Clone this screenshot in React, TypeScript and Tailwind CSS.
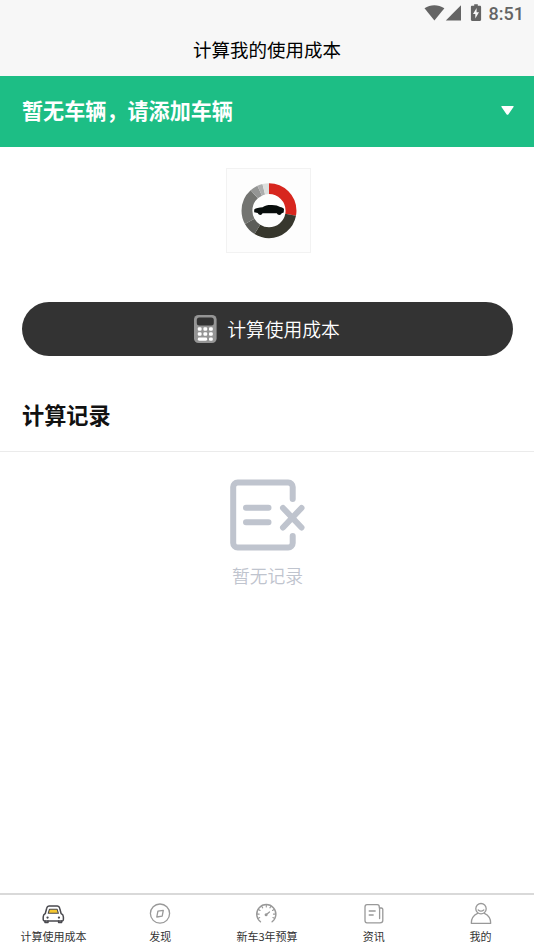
import type { ReactNode } from 'react';

const COST_SEGMENTS = [
  { color: '#d7261e', from: 0, to: 101 },
  { color: '#37372d', from: 101, to: 212 },
  { color: '#5c5d59', from: 212, to: 241 },
  { color: '#737471', from: 241, to: 318 },
  { color: '#949594', from: 318, to: 335 },
  { color: '#adaeae', from: 335, to: 346 },
  { color: '#dcdfdd', from: 346, to: 360 },
];

function StatusBar() {
  return (
    <div className="flex h-[27px] items-start justify-end pr-[10px] text-[#646464]">
      <svg width="60" height="21" viewBox="0 0 60 21" fill="currentColor">
        <path d="M0.500 8.300C6.500 4.200 14 4.200 20.400 8.300L10.400 20.500Z" />
        <path d="M37 5.200V20.500H21.800Z" />
        <path
          fillRule="evenodd"
          d="M50.200 4.200h3.600v1.600h2.100c.7 0 1.200.5 1.200 1.200v12.700c0 .7-.5 1.200-1.200 1.200h-7.800c-.7 0-1.200-.5-1.200-1.200V7c0-.7.5-1.200 1.200-1.200h2.100ZM52.600 8l-3.600 6h2.300v4.500l3.700-6.300h-2.400Z"
        />
      </svg>
      <span className="ml-[5px] font-[Roboto,sans-serif] text-[18px] leading-[27px] font-medium">8:51</span>
    </div>
  );
}

function CostRing() {
  return (
    <svg width="84" height="84" viewBox="0 0 84 84">
      <g transform="rotate(-90 42 42)">
        {COST_SEGMENTS.map(({ color, from, to }) => (
          <circle
            key={from}
            cx="42.300"
            cy="42.500"
            r="22.300"
            fill="none"
            stroke={color}
            strokeWidth="11"
            pathLength="360"
            strokeDasharray={`${to - from} ${360 - to + from}`}
            strokeDashoffset={-from}
          />
        ))}
      </g>
      <path
        fill="#080d0c"
        d="M27.500 40.500c1.700-1.400 5-2.200 8.500-2.300 2.500-2 5.500-2.400 9.500-2.300 4 .1 6.200.8 8.200 2 2 .2 3.200 1 4 2.200l-.3 3.400-2 .7a2.700 2.700 0 0 1-5 .2l-14.400-.1a2.600 2.600 0 0 1-4.900-.2L27.500 43.300Z"
      />
    </svg>
  );
}

function CalculatorIcon() {
  return (
    <svg width="23" height="29" viewBox="0 0 23 29" className="-ml-px">
      <rect x="0" y="0" width="22.600" height="28" rx="4.500" fill="#959595" />
      <rect x="2.800" y="2.500" width="17" height="8" rx="2.500" fill="#333" />
      <g fill="#fff">
        {[12.3, 17.3].map((y) =>
          [3.8, 9.4, 15].map((x) => <rect key={`${x}-${y}`} x={x} y={y} width="3.800" height="3.500" rx="1.200" />),
        )}
        <rect x="3.800" y="22.500" width="9.400" height="3.200" rx="1.400" />
        <rect x="15" y="22.500" width="3.800" height="3.200" rx="1.200" />
      </g>
    </svg>
  );
}

function EmptyIcon() {
  return (
    <svg width="76" height="74" viewBox="0 0 76 74" fill="none" stroke="#bfc4ce" strokeWidth="6" strokeLinecap="round">
      <path strokeLinejoin="round" d="M63.700 21V9a4.500 4.500 0 0 0-4.500-4.500H8.700a4.500 4.500 0 0 0-4.500 4.500V65a4.500 4.500 0 0 0 4.500 4.500h50.500a4.500 4.500 0 0 0 4.500-4.500V58" />
      <path d="M17 29.800H39.500M17 44.200H39.500" />
      <path d="M54 30 72.500 49.500M72.500 30 54 49.500" />
    </svg>
  );
}

function TabIcon({ children }: { children: ReactNode }) {
  return (
    <svg width="24" height="24" viewBox="0 0 24 24" fill="none" stroke="#999" strokeWidth="1.300" strokeLinecap="round" strokeLinejoin="round">
      {children}
    </svg>
  );
}

const TABS = [
  {
    label: '计算使用成本',
    icon: (
      <TabIcon>
        <g stroke="#4a4a4f" strokeWidth="1.500">
          <path d="M4.300 11.500 5.700 6.200Q6.200 4 8 4h8.400q1.800 0 2.300 2.200l1.400 5.300Q22.400 12.500 22.400 15v2.500q0 1.400-1.200 1.400H3.400Q2.200 18.900 2.200 17.500V15q0-2.500 2.100-3.500Z" />
          <path fill="#f6c72f" strokeWidth="1.100" d="M8.400 7.300h7.800l1.200 4H7.200Z" />
          <path d="M4 19v1.400h3V19M17.600 19v1.400h3V19" />
          <path strokeWidth="2.200" d="M6.500 15.600h.1M17.900 15.600h.1" />
        </g>
      </TabIcon>
    ),
  },
  {
    label: '发现',
    icon: (
      <TabIcon>
        <circle cx="12" cy="11.600" r="9.600" />
        <path d="M9.900 9.200 15.300 8.300 14.200 14.200 8.800 15Z" />
      </TabIcon>
    ),
  },
  {
    label: '新车3年预算',
    icon: (
      <TabIcon>
        <g transform="translate(-.7 -.2)">
          <path strokeWidth="1.400" d="M6.200 20A9.600 9.600 0 1 1 17.800 20" />
          <path
            strokeWidth="1.100"
            d="M12 3v2.200M7.400 4.400l1 1.700M16.600 4.400l-1 1.700M4.200 7.700l1.600 1M19.800 7.700l-1.600 1M2.900 12.300h2M21.100 12.300h-2M3.700 16.600l1.700-.8M20.300 16.600l-1.700-.8"
          />
          <circle cx="11.800" cy="13" r="1.500" fill="#999" stroke="none" />
          <path d="M11.800 13 15.200 10.200" />
        </g>
      </TabIcon>
    ),
  },
  {
    label: '资讯',
    icon: (
      <TabIcon>
        <path d="M17.300 6V5q0-2.300-2-2.300H5Q3 2.700 3 5v13.500q0 2.300 2 2.300h13q2.800 0 2.800-2.300V7.500Q20.800 6 19.300 6ZM17.600 6V16.500" />
        <path d="M7.200 9h6M7.200 13h4" />
      </TabIcon>
    ),
  },
  {
    label: '我的',
    icon: (
      <TabIcon>
        <circle cx="12" cy="6.700" r="5.200" />
        <path d="M9.200 7.900q2.800 2.300 5.600 0" />
        <path d="M8.600 11.400Q2.300 14.200 2.300 21.300H21.700Q21.700 14.200 15.400 11.400" />
      </TabIcon>
    ),
  },
];

function TabBar() {
  return (
    <nav className="grid h-[57px] grid-cols-5 border-t-2 border-[#d9d9d9] bg-white">
      {TABS.map(({ label, icon }) => (
        <button key={label} type="button" className="flex flex-col items-center pt-[7px]">
          {icon}
          <span className="mt-[2px] text-[11px] leading-4 whitespace-nowrap text-[#333]">{label}</span>
        </button>
      ))}
    </nav>
  );
}

export default function App() {
  return (
    <div className="flex h-[950px] w-[534px] flex-col bg-white font-['Noto_Sans_CJK_SC',sans-serif]">
      <header className="h-[76px] bg-[#f7f7f7]">
        <StatusBar />
        <h1 className="text-center text-[18.5px] leading-[45px] text-black">计算我的使用成本</h1>
      </header>

      <button type="button" className="flex h-[71px] items-center justify-between bg-[#1dbe85] pr-5 pb-[2px] pl-[22px] text-white">
        <span className="text-[21.1px] leading-[69px] font-bold">暂无车辆，请添加车辆</span>
        <svg width="13" height="9" viewBox="0 0 13 9" fill="currentColor">
          <path d="M1 0H12Q13.300 0 12.500 1L7.300 8.400Q6.500 9.300 5.700 8.400L.5 1Q-.3 0 1 0Z" />
        </svg>
      </button>

      <main className="flex flex-1 flex-col">
        <div className="mt-[21px] ml-[2px] flex h-[85px] w-[85px] items-center justify-center self-center border border-[#f2f2f2] bg-[#fdfdfd]">
          <CostRing />
        </div>

        <button
          type="button"
          className="mt-[49px] mr-[21px] ml-[22px] flex h-[54px] items-center justify-center rounded-full bg-[#333] text-white"
        >
          <CalculatorIcon />
          <span className="ml-[10px] text-[18.8px] leading-[54px] font-[350]">计算使用成本</span>
        </button>

        <h2 className="mt-[22px] h-[74px] border-b border-[#ebebeb] pl-[22px] text-[22.2px] leading-[73px] font-bold text-[#111]">
          计算记录
        </h2>

        <div className="flex flex-col items-center pt-[26px]">
          <EmptyIcon />
          <p className="mt-[10px] ml-px text-[17.8px] leading-[27px] font-[350] text-[#bfc4ce]">暂无记录</p>
        </div>
      </main>

      <TabBar />
    </div>
  );
}
